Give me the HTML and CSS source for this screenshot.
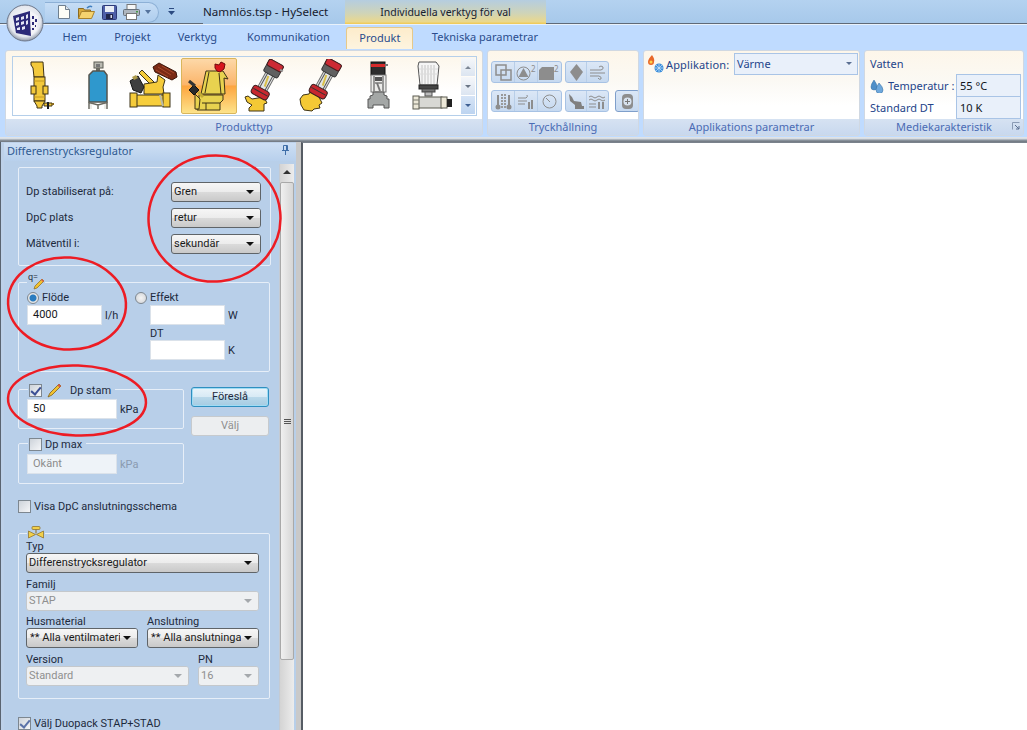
FILE: index.html
```html
<!DOCTYPE html>
<html lang="en">
<head>
  <meta charset="UTF-8" />
  <title>Namnlös.tsp - HySelect</title>
  <link rel="stylesheet" href="styles.css">
</head>
<body>
<div class="app">

  <!-- Title bar -->
  <div class="titlebar">
    <div class="qat">
      <svg class="qat-icon new" width="12" height="14" viewBox="0 0 12 14"><path d="M.5.5h7l4 4v9H.5z" fill="#fdfdf6" stroke="#6f7f8f"/><path d="M7.500.5v4h4" fill="#dfe6ee" stroke="#6f7f8f"/></svg>
      <svg class="qat-icon open" width="17" height="14" viewBox="0 0 17 14"><path d="M.5 3.500h5l1 1.500h6v8H.5z" fill="#d9a93c" stroke="#8a6a20"/><path d="M.5 13.500l3-7h13l-3 7z" fill="#f6d36f" stroke="#a9822c"/><path d="M9 3q3-3 5-1" fill="none" stroke="#3f7fc0" stroke-width="1.500"/></svg>
      <svg class="qat-icon save" width="15" height="15" viewBox="0 0 15 15"><rect x=".5" y=".5" width="14" height="14" rx="1" fill="#4d5fa8" stroke="#2d3a78"/><rect x="3" y="1" width="9" height="6" fill="#e8edf5"/><rect x="4" y="9" width="7" height="5" fill="#20264a"/><rect x="8.500" y="10" width="1.500" height="3" fill="#d8dcec"/></svg>
      <svg class="qat-icon print" width="17" height="16" viewBox="0 0 17 16"><rect x="4" y=".5" width="9" height="6" fill="#f7f7f7" stroke="#777"/><rect x=".5" y="5.500" width="16" height="6" rx="1" fill="#aeb6bf" stroke="#67707a"/><rect x="3.500" y="9.500" width="10" height="6" fill="#fff" stroke="#777"/><rect x="13" y="7" width="2" height="1.500" fill="#4a9a4a"/></svg>
      <svg class="qat-icon arrow" width="6" height="4" viewBox="0 0 6 4"><path d="M0 0h6L3 4z" fill="#54729c"/></svg>
    </div>
    <svg class="qat-more" width="7" height="8" viewBox="0 0 7 8"><path d="M1 0h5v1H1z" fill="#2b4a80"/><path d="M0 3h7L3.500 7z" fill="#2b4a80"/></svg>
    <div class="doc-title">Namnlös.tsp - HySelect</div>
    <div class="context-tab">Individuella verktyg för val</div>
  </div>

  <!-- Tabs -->
  <div class="tabs">
    <a class="tab">Hem</a>
    <a class="tab">Projekt</a>
    <a class="tab">Verktyg</a>
    <a class="tab comm">Kommunikation</a>
    <a class="tab active">Produkt</a>
    <a class="tab">Tekniska parametrar</a>
  </div>

  <!-- Ribbon -->
  <div class="ribbon">
    <div class="group group-product">
      <div class="group-body">
        <div class="gallery">
          <div class="gallery-item">
            <svg width="54" height="54" viewBox="0 0 54 54"><g fill="#f3c93c" stroke="#3f3314"><path d="M16 3h12l1 15h-10l-1-9-2-3z"/><rect x="19" y="18" width="11" height="24"/><rect x="16" y="27" width="5" height="8"/><rect x="28" y="27" width="5" height="8"/><path d="M19 42h11l-3 5v2h-5v-2z"/><path d="M29 44h8v3h-8z"/></g><rect x="32" y="43" width="2" height="7" fill="#1d1d1d"/><rect x="37" y="44" width="2" height="2" fill="#8a6a20"/><path d="M19 22h11M19 38h11" stroke="#c49a20"/></svg>
          </div>
          <div class="gallery-item">
            <svg width="54" height="54" viewBox="0 0 54 54"><rect x="23" y="3" width="9" height="6" fill="#b9b9b0" stroke="#5d5d55"/><rect x="25" y="5" width="4" height="3" fill="#777"/><rect x="25" y="9" width="4" height="3" fill="#6b6b63"/><path d="M18 16l4-4h11l3 4v27H18z" fill="#2f98cd" stroke="#55554e" stroke-width="1.500"/><path d="M18 43l0 7M36 43l0 7M27 45v5M18 44h2l7 2 7-2h2" fill="none" stroke="#6a6a62" stroke-width="1.500"/><path d="M20 45v5M34 45v5" stroke="#d8d8d0"/></svg>
          </div>
          <div class="gallery-item">
            <svg width="54" height="54" viewBox="0 0 54 54"><g stroke="#3d3316"><path d="M27 28L13 14l3-3 14 14z" fill="#f5cb3a"/><path d="M18 25l13-2 1-7 7 5-2 7 1 7H18z" fill="#f5cb3a"/><rect x="9" y="36" width="30" height="11" fill="#f7ce3c"/><rect x="4" y="34" width="7" height="14" fill="#f5cb3a"/><rect x="37" y="34" width="7" height="14" fill="#f5cb3a"/></g><path d="M34 36l3 11" stroke="#b9b9a9" stroke-width="2"/><path d="M27 8l6-4 17 9 1 5-5 3-17-8z" fill="#7b2a14" stroke="#3a1408"/><path d="M32 8l13 8M36 7l12 7M30 11l12 7" stroke="#a8482a"/><path d="M4 22l8-5 6 11-3 6-8-3z" fill="#3f3f3f" stroke="#161616"/><path d="M6 18l4-2 2 3-4 2z" fill="#ad9a4a"/></svg>
          </div>
          <div class="gallery-item selected">
            <svg width="54" height="54" viewBox="0 0 54 54"><g stroke="#3d3316"><path d="M24 12h17l5 8-4-1 1 16H19z" fill="#e8d24f"/><path d="M27 13l-4 21M37 14l2 21" fill="none"/><path d="M17 36h24v5l-3 3v7H15V41h2z" fill="#e8d24f"/><path d="M13 35l5 5-1 10h-4z" fill="#e8d24f"/><path d="M20 44h18M24 44v7" fill="none"/></g><path d="M33 5l4 1 2-3 4 2-1 5-4 3-3-1-2-3z" fill="#d8141c" stroke="#70090c"/><path d="M12 26l5 5-5 5-5-5z" fill="#2a2a2a" stroke="#111"/><path d="M7 22l6 5" stroke="#333" stroke-width="3"/><path d="M16 33l5 5" stroke="#c2aa35" stroke-width="3"/></svg>
          </div>
          <div class="gallery-item">
            <svg width="54" height="54" viewBox="0 0 54 54"><path d="M7 38l3-1 4 3 12-2 3 6-3 1v7H11v-3l3-3-5-3z" fill="#f4c935" stroke="#3d3316"/><g transform="translate(37 7) rotate(29)"><path d="M-5 9h10v18H-5z" fill="#e2e4e4" stroke="#707070"/><path d="M-3 9v17M3 9v17" stroke="#555"/><path d="M-1 12l2 11" stroke="#d8c04a" stroke-width="2"/><rect x="-8" y="-4" width="16" height="14" rx="2" fill="#606060" stroke="#333"/><rect x="-8" y="-4" width="16" height="7" rx="2" fill="#cc2a34" stroke="#4a2020"/><rect x="-9" y="26" width="18" height="9" rx="3" fill="#c8282f" stroke="#3a2020"/><path d="M-8 30h16" stroke="#333"/></g><path d="M42 11l3 1" stroke="#999" stroke-width="2"/></svg>
          </div>
          <div class="gallery-item">
            <svg width="54" height="54" viewBox="0 0 54 54"><path d="M6 40l3-4 6-1 2-4 3 2 5 5 3 6-3 2 1 3-6 1-2 2-8-1-3-5z" fill="#f4c935" stroke="#3d3316"/><g transform="translate(39 6) rotate(29)"><path d="M-5 9h10v18H-5z" fill="#e2e4e4" stroke="#707070"/><path d="M-3 9v17M3 9v17" stroke="#555"/><path d="M-1 12l2 11" stroke="#d8c04a" stroke-width="2"/><rect x="-8" y="-4" width="16" height="14" rx="2" fill="#606060" stroke="#333"/><rect x="-8" y="-4" width="16" height="7" rx="2" fill="#cc2a34" stroke="#4a2020"/><rect x="-9" y="26" width="18" height="9" rx="3" fill="#c8282f" stroke="#3a2020"/><path d="M-8 30h16" stroke="#333"/></g></svg>
          </div>
          <div class="gallery-item">
            <svg width="54" height="54" viewBox="0 0 54 54"><rect x="22" y="3" width="14" height="13" fill="#2d2d2d" stroke="#111"/><rect x="22" y="5" width="14" height="3" fill="#d62a2a"/><rect x="36" y="5" width="3" height="2" fill="#777"/><rect x="22" y="16" width="15" height="17" fill="#ececea" stroke="#777"/><path d="M25 17v15M34 17v15M26 24h7" stroke="#444"/><rect x="26" y="18" width="7" height="4" fill="#555"/><path d="M28 24l3 8" stroke="#777" stroke-width="2"/><path d="M24 33h11v3l3 1v3l2 0v9h-5v-3h-11v3h-5v-9l2 0v-3l3-1z" fill="#a4a7a6" stroke="#555"/></svg>
          </div>
          <div class="gallery-item">
            <svg width="54" height="54" viewBox="0 0 54 54"><path d="M14 3h17l3 4-2 19H15L13 7z" fill="#f5f5f5" stroke="#555"/><path d="M17 6v19M20 6v19M23 6v19M26 6v19M29 6v19" stroke="#c4c4c4"/><path d="M14 10h19M14 15h19" stroke="#dcdcdc"/><rect x="14" y="26" width="19" height="4" fill="#444" stroke="#222"/><rect x="17" y="30" width="13" height="3" fill="#777" stroke="#444"/><rect x="20" y="33" width="7" height="4" fill="#bbb" stroke="#555"/><rect x="13" y="38" width="24" height="11" fill="#d8d8d4" stroke="#5b5b50"/><rect x="8" y="37" width="6" height="13" fill="#ece8d8" stroke="#5b5b50"/><path d="M8 41h6M8 45h6" stroke="#7b7b70"/><rect x="36" y="38" width="6" height="11" fill="#ece8d8" stroke="#5b5b50"/><rect x="42" y="40" width="5" height="8" fill="#222"/></svg>
          </div>
          <div class="gallery-scroll">
            <div class="scroll-btn"><i class="up"></i></div>
            <div class="scroll-btn"><i class="down"></i></div>
            <div class="scroll-btn more"><i class="down"></i></div>
          </div>
        </div>
      </div>
      <div class="group-label">Produkttyp</div>
    </div>

    <div class="group group-tryck">
      <div class="group-body tool-rows">
        <div class="tool-row">
          <div class="tool-set">
            <span class="tool"><svg width="17" height="17" viewBox="0 0 17 17"><path d="M1 1h10v10H1zM6 6h10v10H6zM11 3v6M8 6h6" fill="none" stroke="#8d8d8d" stroke-width="1.500"/></svg></span>
            <span class="tool sup"><svg width="15" height="15" viewBox="0 0 15 15"><circle cx="7.500" cy="7.500" r="6.500" fill="none" stroke="#8d8d8d"/><path d="M7.500 2l5 9h-10z" fill="#8d8d8d"/></svg><em>2</em></span>
            <span class="tool sup"><svg width="15" height="13" viewBox="0 0 15 13"><path d="M0 3l3-3h12v13H0z" fill="#8d8d8d"/></svg><em>2</em></span>
          </div>
          <div class="tool-set narrow">
            <span class="tool"><svg width="15" height="17" viewBox="0 0 15 17"><path d="M7.500 0L14 8l-6.500 9L1 8z" fill="#8d8d8d"/></svg></span>
            <span class="tool"><svg width="17" height="15" viewBox="0 0 17 15"><path d="M1 5h11q3-1 2-3-2-2-4 0M1 8h15M1 11h9q3 1 2 3-2 1-3-1" fill="none" stroke="#8d8d8d"/></svg></span>
          </div>
        </div>
        <div class="tool-row">
          <div class="tool-set">
            <span class="tool"><svg width="17" height="17" viewBox="0 0 17 17"><path d="M2 2h2v10H2zM13 2h2v10h-2z" fill="#8d8d8d"/><circle cx="3" cy="14" r="2.500" fill="#8d8d8d"/><circle cx="14" cy="14" r="2.500" fill="#8d8d8d"/><path d="M7 1v15M10 1v15" stroke="#9a9a9a" stroke-dasharray="2 1" stroke-width="2"/></svg></span>
            <span class="tool"><svg width="17" height="15" viewBox="0 0 17 15"><path d="M0 4h8q2-1 1-3M0 7h9M0 10h7" fill="none" stroke="#8d8d8d"/><path d="M10 8h2v7h-2zM13 6h2v9h-2z" fill="#8d8d8d"/></svg></span>
            <span class="tool"><svg width="15" height="15" viewBox="0 0 15 15"><circle cx="7.500" cy="7.500" r="6.500" fill="none" stroke="#8d8d8d"/><path d="M4 4l4 4" stroke="#8d8d8d"/></svg></span>
          </div>
          <div class="tool-set narrow">
            <span class="tool"><svg width="17" height="17" viewBox="0 0 17 17"><path d="M1 1l3 3 2 4 7 1 1 4h2v3H7V12L2 8z" fill="#808080"/></svg></span>
            <span class="tool"><svg width="17" height="15" viewBox="0 0 17 15"><path d="M0 3q2-2 4 0t4 0 4 0 4 0M0 6q2-2 4 0t4 0 4 0 4 0M0 10h7M0 13h7" fill="none" stroke="#8d8d8d"/><path d="M9 8h2v7H9zM13 8h2v7h-2z" fill="#8d8d8d"/></svg></span>
          </div>
          <div class="tool-set solo">
            <span class="tool"><svg width="13" height="17" viewBox="0 0 13 17"><rect x="1" y="1" width="11" height="15" rx="4" fill="#8d8d8d"/><circle cx="6.500" cy="8.500" r="4" fill="#d8e2ee"/><path d="M6.500 6v5M4 8.500h5" stroke="#777"/></svg></span>
          </div>
        </div>
      </div>
      <div class="group-label">Tryckhållning</div>
    </div>

    <div class="group group-app">
      <div class="group-body">
        <div class="app-row">
          <svg width="18" height="20" viewBox="0 0 18 20"><path d="M5 1q3 4 2 7 0 3-3 3T1 8q0-3 4-7z" fill="#e8682a"/><circle cx="4" cy="8" r="1.500" fill="#fbd24a"/><circle cx="12" cy="14" r="4.500" fill="#3c8fdc"/><path d="M12 10v8M8 14h8M9 11l6 6M15 11l-6 6" stroke="#cfe6fa" stroke-width=".7"/></svg>
          <span class="app-label">Applikation:</span>
          <div class="app-combo">Värme<i class="down"></i></div>
        </div>
      </div>
      <div class="group-label">Applikations parametrar</div>
    </div>

    <div class="group group-media">
      <div class="group-body media">
        <div class="media-title">Vatten</div>
        <div class="media-row">
          <span class="media-label">
            <svg width="14" height="16" viewBox="0 0 14 16"><path d="M4 3q3 4 3 7a3 3 0 0 1-6 0q0-3 3-7z" fill="#4f8fc8" stroke="#2f6aa0" stroke-width=".5"/><path d="M9 6q4 4 4 7a3 3 0 0 1-7 0q0-3 3-7z" fill="#6ea8dc" stroke="#2f6aa0" stroke-width=".5"/></svg>
            Temperatur :
          </span>
          <span class="media-value">55 °C</span>
        </div>
        <div class="media-row">
          <span class="media-label">Standard DT</span>
          <span class="media-value">10 K</span>
        </div>
      </div>
      <div class="group-label">Mediekarakteristik
        <svg class="launcher" width="8" height="8" viewBox="0 0 8 8"><path d="M.5 7.500v-7h7" fill="none" stroke="#8a9bb5"/><path d="M3 3l4 4M7 4v3H4" fill="none" stroke="#5b6f90"/></svg>
      </div>
    </div>
  </div>

  <div class="ribbon-edge"></div>

  <!-- Main area -->
  <div class="main">
    <aside class="panel">
      <div class="panel-head">
        <span>Differenstrycksregulator</span>
        <svg width="9" height="10" viewBox="0 0 9 10"><path d="M2.500.5h4v5h-4zM1 5.500h7M4.500 6v4" fill="none" stroke="#3f6ea8"/><path d="M5 1h1v4H5z" fill="#3f6ea8"/></svg>
      </div>
      <div class="panel-body">
        <form class="form">

          <div class="box box-dp">
            <span>Dp stabiliserat på:</span><div class="combo">Gren<i></i></div>
            <span>DpC plats</span><div class="combo">retur<i></i></div>
            <span>Mätventil i:</span><div class="combo">sekundär<i></i></div>
          </div>

          <div class="box box-flow">
            <div class="legend legend-q">
              <span class="q-mark">q=</span>
              <svg width="12" height="12" viewBox="0 0 12 12"><path d="M9 1l2 2-7 7-3 1 1-3z" fill="#f2c230" stroke="#8a6a20" stroke-width=".7"/><path d="M9 1l2 2-1 1-2-2z" fill="#d85a4a"/></svg>
            </div>
            <div class="flow-col">
              <label class="radio-row"><i class="radio on"></i>Flöde</label>
              <div class="input-row"><div class="input">4000</div><span>l/h</span></div>
            </div>
            <div class="flow-col">
              <label class="radio-row"><i class="radio"></i>Effekt</label>
              <div class="input-row indent"><div class="input"></div><span>W</span></div>
              <div class="dt-label indent">DT</div>
              <div class="input-row indent"><div class="input"></div><span>K</span></div>
            </div>
          </div>

          <div class="dp-row">
            <div class="dp-boxes">
              <div class="box box-small">
                <div class="legend legend-stam">
                  <i class="check on"></i>
                  <svg width="15" height="15" viewBox="0 0 15 15"><path d="M12 1l2 2-9 9-4 2 2-4z" fill="#f2c230" stroke="#7d5f1c" stroke-width=".8"/><path d="M12 1l2 2-1.500 1.500-2-2z" fill="#d85a4a"/></svg>
                  <span class="stam-text">Dp stam</span>
                </div>
                <div class="input-row"><div class="input wide">50</div><span>kPa</span></div>
              </div>
              <div class="box box-small off">
                <div class="legend legend-max">
                  <i class="check"></i>
                  <span>Dp max</span>
                </div>
                <div class="input-row"><div class="input wide muted">Okänt</div><span>kPa</span></div>
              </div>
            </div>
            <div class="dp-buttons">
              <div class="btn default">Föreslå</div>
              <div class="btn disabled">Välj</div>
            </div>
          </div>

          <label class="check-row schema"><i class="check"></i>Visa DpC anslutningsschema</label>

          <div class="box box-valve">
            <div class="legend legend-valve">
              <svg width="16" height="15" viewBox="0 0 16 15"><rect x="4" y="0.500" width="8" height="3" rx="1" fill="#f2d04a" stroke="#8a6a20" stroke-width=".7"/><path d="M8 3.500v4" stroke="#8a6a20"/><path d="M.5 5l7 3.500-7 3.500zM15.500 5l-7 3.500 7 3.500z" fill="#f2d04a" stroke="#8a6a20" stroke-width=".7"/></svg>
            </div>
            <div class="field"><label>Typ</label><div class="combo">Differenstrycksregulator<i></i></div></div>
            <div class="field"><label>Familj</label><div class="combo disabled">STAP<i></i></div></div>
            <div class="field-row even">
              <div class="field"><label>Husmaterial</label><div class="combo cut">** Alla ventilmateri<i></i></div></div>
              <div class="field"><label>Anslutning</label><div class="combo cut">** Alla anslutninga<i></i></div></div>
            </div>
            <div class="field-row version">
              <div class="field"><label>Version</label><div class="combo disabled">Standard<i></i></div></div>
              <div class="field"><label>PN</label><div class="combo disabled">16<i></i></div></div>
            </div>
          </div>

          <label class="check-row duopack"><i class="check on light"></i>Välj Duopack STAP+STAD</label>
        </form>

        <div class="scrollbar">
          <div class="scroll-up"></div>
          <div class="scroll-thumb"><span></span><span></span><span></span></div>
        </div>
      </div>
    </aside>
    <div class="canvas"></div>
  </div>

  <!-- Application button and hand drawn marks lying over the UI -->
  <svg class="orb" width="38" height="38" viewBox="0 0 38 38">
    <defs>
      <radialGradient id="orbFill" cx="50%" cy="45%" r="55%">
        <stop offset="0" stop-color="#fff"/><stop offset=".78" stop-color="#e4e7ee"/><stop offset="1" stop-color="#8f98a8"/>
      </radialGradient>
    </defs>
    <circle cx="19" cy="19" r="18" fill="url(#orbFill)" stroke="#6f7a8e"/>
    <path d="M7 12l17-5 1 25-15-3z" fill="#2c2a78"/>
    <path d="M24 7l8 5-1 14-6 6z" fill="#f4f4f8"/>
    <path d="M10 14l3-1v3l-3 1zM15 13l3-1v3l-3 1zM20 11l2-1v4l-2 1zM10 19l3-1v3l-3 1zM15 18l3-1v3l-3 1zM20 17l2-1v4l-2 1zM11 24l3-1v3l-3 0zM16 23l3-1v3l-3 1z" fill="#e4e6f4"/>
    <path d="M26 12h2v3h-2zM29 15h2v3h-2zM26 18h2v3h-2zM29 21h1v2h-1zM26 24h2v2h-2z" fill="#2c2a78"/>
  </svg>

  <svg class="marks" width="1027" height="730" viewBox="0 0 1027 730">
    <g fill="none" stroke="#ed1c24" stroke-width="2.500">
      <ellipse cx="214.500" cy="218.500" rx="66" ry="63" transform="rotate(-6 214.500 218.500)"/>
      <ellipse cx="67" cy="303.500" rx="59" ry="46" transform="rotate(4 67 303.500)"/>
      <ellipse cx="77" cy="400.500" rx="69" ry="35" transform="rotate(2 77 400.500)"/>
    </g>
  </svg>
</div>
</body>
</html>
```

FILE: styles.css
```css
* {
  box-sizing: border-box;
  margin: 0;
  padding: 0;
}

html, body {
  width: 1027px;
  height: 730px;
  overflow: hidden;
}

body {
  font-family: "Noto Sans", "DejaVu Sans", sans-serif;
  font-size: 11px;
  color: #1d2a3c;
  background: #a9c9ec;
}

.app {
  position: relative;
  width: 1027px;
  height: 730px;
  overflow: hidden;
}

/* Title bar */
.titlebar {
  height: 24px;
  display: flex;
  align-items: center;
  background: linear-gradient(to bottom, #b4d2f0, #a6c8ea);
  box-shadow: inset 0 -1px 0 #5f6a78;
}

.qat {
  width: 114px;
  height: 21px;
  margin-left: 45px;
  display: flex;
  align-items: center;
  padding-left: 13px;
  border: 1px solid #8db0d6;
  border-left: 0;
  border-radius: 0 11px 11px 0;
  background: linear-gradient(to bottom, #c6ddf5, #aecdee);
}

.qat-icon.new { margin-right: 8px; }
.qat-icon.open { margin-right: 7px; }
.qat-icon.save { margin-right: 6px; }
.qat-icon.print { margin-right: 5px; }

.qat-more {
  margin-left: 9px;
}

.doc-title {
  margin-left: 28px;
  width: 142px;
  font-size: 11.6px;
  color: #16202e;
  white-space: nowrap;
  align-self: stretch;
  line-height: 24px;
  background: linear-gradient(to bottom, #b4d2f0, #a6c8ea);
}

.context-tab {
  width: 201px;
  height: 24px;
  line-height: 24px;
  text-align: center;
  font-size: 10.5px;
  color: #16202e;
  background: linear-gradient(to bottom, #b5cde0 0%, #cfd4b8 55%, #ead88e 90%, #f0c850 100%);
}

/* Tabs */
.tabs {
  height: 25px;
  display: flex;
  align-items: flex-end;
  padding-left: 49px;
  background: #bfdbff;
  border-top: 1px solid #e8f1fb;
}

.tab {
  height: 22px;
  line-height: 20px;
  padding: 0 13.5px;
  font-size: 11px;
  color: #2a4c8c;
  white-space: nowrap;
}

.tab.comm {
  margin-left: 3px;
  margin-right: 3px;
}

.tab.active {
  margin-right: 5px;
  padding: 0 12px;
  background: linear-gradient(to bottom, #fdeccb, #fdf4e0);
  border: 1px solid #e6c98a;
  border-bottom: 0;
  border-radius: 3px 3px 0 0;
}

/* Ribbon */
.ribbon {
  height: 88px;
  display: flex;
  gap: 4px;
  padding: 1px 3px 1px 5px;
  background: #bfdbff;
}

.group {
  display: flex;
  flex-direction: column;
  border: 1px solid #d0d8e2;
  border-radius: 3px;
  overflow: hidden;
}

.group-product { width: 478px; }
.group-tryck { width: 152px; }
.group-app { width: 217px; }
.group-media { width: 160px; }

.group-body {
  flex: 1;
  background: linear-gradient(to bottom, #fdf6ea 0%, #fbf9f4 45%, #ffffff 80%);
}

.group-label {
  height: 16px;
  line-height: 16px;
  text-align: center;
  position: relative;
  color: #4a6bb4;
  background: linear-gradient(to bottom, #d6e2f2, #c8d8ee);
}

.launcher {
  position: absolute;
  right: 3px;
  top: 3px;
}

.gallery {
  display: flex;
  margin: 5px 5px 0 6px;
  height: 60px;
  padding: 1px;
  border: 1px solid #b5cfea;
  background: linear-gradient(to bottom, #fdf7ec, #ffffff 60%);
}

.gallery-item {
  width: 56px;
  height: 56px;
  display: flex;
  align-items: center;
  justify-content: center;
}

.gallery-item.selected {
  border: 1px solid #d9b65c;
  border-radius: 2px;
  background: linear-gradient(to bottom, #fdd8a8 0%, #fbb56a 48%, #fda53f 50%, #fde38a 100%);
}

.gallery-scroll {
  width: 14px;
  margin-left: 1px;
  display: flex;
  flex-direction: column;
  gap: 1px;
}

.scroll-btn {
  flex: 1;
  display: flex;
  align-items: center;
  justify-content: center;
  background: linear-gradient(to bottom, #f5f7fa, #dce5f1);
}

.scroll-btn.more {
  background: linear-gradient(to bottom, #d6e4f6, #bdd4f0);
}

i.up, i.down {
  display: block;
  width: 0;
  height: 0;
  border-left: 3px solid transparent;
  border-right: 3px solid transparent;
}

i.up { border-bottom: 3px solid #7d8795; }
i.down { border-top: 3px solid #6a7585; }
.scroll-btn.more i.down { border-top-color: #3e5f92; }

/* Small disabled tools */
.tool-rows {
  display: flex;
  flex-direction: column;
  gap: 7px;
  padding: 10px 0 0 3px;
}

.tool-row {
  display: flex;
  gap: 3px;
}

.tool-set {
  display: flex;
  height: 22px;
  border: 1px solid #a7c2e4;
  border-radius: 3px;
  background: linear-gradient(to bottom, #dbe7f6, #c6d9f0);
}

.tool-set.narrow .tool {
  width: 21px;
}

.tool-set.solo {
  margin-left: 3px;
  border-color: #7f9fcb;
}

.tool {
  width: 23px;
  display: flex;
  align-items: center;
  justify-content: center;
  border-right: 1px solid #b8cee8;
}

.tool:last-child {
  border-right: 0;
}

.tool.sup {
  justify-content: flex-start;
  padding: 2px 0 0 1px;
}

.tool.sup em {
  align-self: flex-start;
  font-style: normal;
  font-size: 8px;
  line-height: 9px;
  color: #8d8d8d;
}

/* Application group */
.app-row {
  display: flex;
  align-items: center;
  padding: 2px 0 0 3px;
}

.app-label {
  margin-left: 1px;
  width: 68px;
  color: #24448a;
  letter-spacing: .15px;
}

.app-combo {
  width: 124px;
  height: 22px;
  line-height: 20px;
  padding-left: 2px;
  position: relative;
  color: #24448a;
  background: #e9f0fa;
  border: 1px solid #a9c4e6;
}

.app-combo i.down {
  position: absolute;
  right: 5px;
  top: 8px;
  border-top-color: #5a6f92;
}

/* Medium group */
.media {
  padding: 2px 2px 0 5px;
}

.media-title {
  height: 21px;
  line-height: 22px;
  color: #24448a;
}

.media-row {
  height: 22px;
  display: flex;
  justify-content: space-between;
  align-items: center;
}

.media-label {
  display: flex;
  align-items: center;
  gap: 4px;
  color: #24448a;
}

.media-value {
  width: 65px;
  height: 23px;
  line-height: 21px;
  padding-left: 3px;
  color: #10141c;
  background: #e9f0fa;
  border: 1px solid #a9c4e6;
}

.ribbon-edge {
  height: 5px;
  background: linear-gradient(to bottom, #e2e6ea 0%, #d8dde2 30%, #87909a 70%, #6d747c 100%);
}

/* Main */
.main {
  height: 588px;
  display: flex;
}

.panel {
  width: 301px;
  padding: 1px 5px 0 3px;
  border-left: 1px solid #5a6470;
  background: #bdd1e9;
  box-shadow: inset -5px 0 0 #c9c9c9;
}

.panel-head {
  height: 18px;
  display: flex;
  justify-content: space-between;
  align-items: center;
  padding: 0 6px 4px 3px;
  color: #2f5a92;
  background: linear-gradient(to bottom, #cddff4, #b8d0ec);
}

.panel-body {
  display: flex;
  background: #b8cfe9;
  height: 569px;
}

.form {
  width: 275px;
  padding: 6px 0 0 14px;
  flex: none;
  font-family: "Roboto", "Noto Sans", sans-serif;
  font-size: 11px;
}

.box {
  position: relative;
  border: 1px solid #e6eef8;
  border-radius: 2px;
}

.box-dp {
  width: 253px;
  height: 99px;
  padding: 14px 9px 0 7px;
  display: grid;
  grid-template-columns: 1fr 90px;
  grid-auto-rows: 20px;
  row-gap: 6px;
  align-items: center;
}

.box-dp span {
  margin-top: -2px;
}

.combo {
  position: relative;
  height: 20px;
  line-height: 18px;
  padding-left: 2px;
  white-space: nowrap;
  overflow: hidden;
  color: #1a1a1a;
  border: 1px solid #5f6468;
  border-radius: 3px;
  background: linear-gradient(to bottom, #f6f6f6 0%, #ececec 48%, #dadada 52%, #c9c9c9 100%);
}

.combo i {
  position: absolute;
  right: 0;
  top: 0;
  width: 17px;
  height: 18px;
  background: inherit;
}

.combo i::after {
  content: "";
  position: absolute;
  left: 3px;
  top: 7px;
  border-left: 4px solid transparent;
  border-right: 4px solid transparent;
  border-top: 4px solid #111;
}

.combo.disabled {
  color: #8f8f8f;
  border-color: #c4c8cc;
  background: #eef0f2;
}

.combo.disabled i::after {
  border-top-color: #a4a8ac;
}

.legend {
  position: absolute;
  display: flex;
  align-items: center;
  background: #b8cfe9;
}

.box-flow {
  margin-top: 16px;
  width: 252px;
  height: 90px;
  display: flex;
  padding: 7px 0 0 8px;
}

.legend-q {
  left: 8px;
  top: -10px;
  width: 18px;
  height: 17px;
  align-items: flex-end;
}

.q-mark {
  position: absolute;
  left: 1px;
  top: 0;
  font-size: 9px;
  line-height: 9px;
}

.legend-q svg {
  margin-left: 6px;
}

.flow-col {
  width: 108px;
}

.radio-row {
  height: 15px;
  display: flex;
  align-items: center;
  gap: 3px;
}

.radio {
  width: 12px;
  height: 12px;
  border-radius: 50%;
  border: 1px solid #7d8790;
  background: radial-gradient(circle, #f4f4f4, #cfd2d6);
}

.radio.on {
  background: radial-gradient(circle, #2a7cc0 0 3px, #e8e8e8 4px);
}

.input-row {
  display: flex;
  align-items: center;
  gap: 3px;
}

.input {
  width: 75px;
  height: 20px;
  line-height: 18px;
  padding-left: 5px;
  color: #15181c;
  background: #fff;
  border: 1px solid #dbe2ea;
}

.input.wide {
  width: 90px;
}

.input.muted {
  color: #8c8c8c;
  background: #eef3f8;
}

.indent {
  margin-left: 15px;
}

.dt-label {
  height: 15px;
  line-height: 17px;
}

.dp-row {
  display: flex;
  gap: 7px;
  margin-top: 17px;
}

.dp-boxes {
  width: 166px;
}

.box-small {
  height: 40px;
  padding: 9px 0 0 8px;
}

.box-small + .box-small {
  margin-top: 14px;
  height: 41px;
  padding-top: 10px;
}

.box-small.off .input-row span {
  color: #8a9ab0;
}

.legend-stam {
  left: 9px;
  top: -7px;
  height: 14px;
  padding: 0 4px 0 1px;
}

.legend-stam svg {
  margin-left: 5px;
}

.stam-text {
  margin-left: 8px;
}

.legend-max {
  left: 9px;
  top: -7px;
  height: 14px;
  padding: 0 4px 0 1px;
  gap: 3px;
}

.check {
  display: block;
  flex: none;
  width: 13px;
  height: 13px;
  position: relative;
  border: 1px solid #7d8790;
  background: linear-gradient(135deg, #cdd3da, #f5f6f8);
}

.check.on::after {
  content: "";
  position: absolute;
  left: 3px;
  top: 0;
  width: 4px;
  height: 8px;
  border: solid #3b4f94;
  border-width: 0 2px 2px 0;
  transform: rotate(40deg);
}

.check.light::after {
  border-color: #5b72a8;
}

.dp-buttons {
  width: 78px;
  margin-top: -2px;
  display: flex;
  flex-direction: column;
  gap: 9px;
}

.btn {
  height: 20px;
  line-height: 18px;
  text-align: center;
  border-radius: 3px;
}

.btn.default {
  border: 1px solid #2f8fc0;
  background: linear-gradient(to bottom, #eaf4fa 0%, #d8eaf5 48%, #b9d8ea 52%, #a5cbe2 100%);
  box-shadow: inset 0 0 0 1px #9fdcf4;
}

.btn.disabled {
  color: #8f8f8f;
  border: 1px solid #c6cace;
  background: #eceef0;
}

.check-row {
  display: flex;
  align-items: center;
  gap: 3px;
  height: 13px;
}

.schema {
  margin-top: 16px;
}

.box-valve {
  margin-top: 20px;
  width: 252px;
  height: 166px;
  padding: 7px 10px 0 7px;
}

.legend-valve {
  left: 8px;
  top: -8px;
  width: 18px;
  height: 15px;
  justify-content: center;
}

.field label {
  display: block;
  height: 12px;
  line-height: 12px;
}

.field + .field {
  margin-top: 6px;
}

.field-row {
  display: grid;
  margin-top: 5px;
  column-gap: 9px;
}

.field-row.version {
  margin-top: 6px;
}

.field-row .field + .field {
  margin-top: 0;
}

.field-row.even {
  grid-template-columns: 112px 112px;
}

.field-row.version {
  grid-template-columns: 163px 61px;
}

.combo.cut {
  padding-left: 3px;
}

.duopack {
  margin-top: 18px;
}

.scrollbar {
  width: 15px;
  margin-top: 3px;
  border-left: 1px solid #c4cbd4;
  background: linear-gradient(to right, #d4d4d4, #ececec);
}

.scroll-up {
  height: 17px;
  position: relative;
}

.scroll-up::after {
  content: "";
  position: absolute;
  left: 3px;
  top: 6px;
  border-left: 4px solid transparent;
  border-right: 4px solid transparent;
  border-bottom: 4px solid #333;
}

.scroll-thumb {
  height: 478px;
  margin-top: 1px;
  display: flex;
  flex-direction: column;
  align-items: center;
  justify-content: center;
  gap: 1px;
  border: 1px solid #a9a9a9;
  border-radius: 2px;
  background: linear-gradient(to right, #f0f0f0, #d6d6d6);
}

.scroll-thumb span {
  width: 7px;
  height: 1px;
  background: #555;
}

.canvas {
  flex: 1;
  background: #fff;
  border-left: 2px solid #565c64;
  border-top: 1px solid #7a828c;
}

/* Overlays */
.orb {
  position: absolute;
  left: 6px;
  top: 4px;
}

.marks {
  position: absolute;
  left: 0;
  top: 0;
  pointer-events: none;
}
```
